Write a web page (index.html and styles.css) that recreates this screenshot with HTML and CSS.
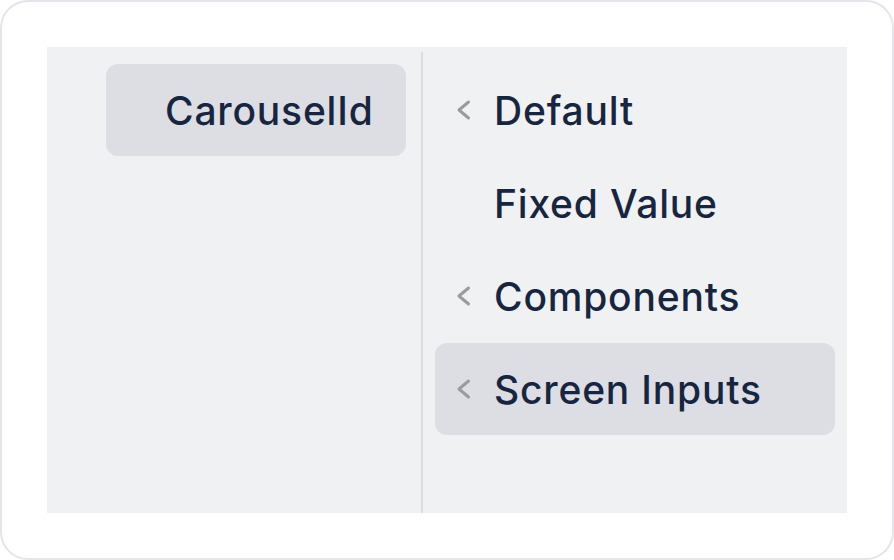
FILE: index.html
```html
<!DOCTYPE html>
<html>
<head>
<meta charset="utf-8">
<link rel="stylesheet" href="styles.css">
</head>
<body>
<div class="card">
  <div class="panel">
    <div class="col col-left">
      <div class="item item-left active">CarouselId</div>
    </div>
    <div class="divider"></div>
    <div class="col col-right">
      <div class="item">
        <svg class="chev" width="16" height="22" viewBox="0 0 16 22"><path d="M13.5 3 L4 11 L13.5 19" fill="none" stroke="#9a9ba0" stroke-width="3" stroke-linecap="round" stroke-linejoin="round"/></svg>
        <span class="label">Default</span>
      </div>
      <div class="item">
        <span class="chev"></span>
        <span class="label">Fixed Value</span>
      </div>
      <div class="item">
        <svg class="chev" width="16" height="22" viewBox="0 0 16 22"><path d="M13.5 3 L4 11 L13.5 19" fill="none" stroke="#9a9ba0" stroke-width="3" stroke-linecap="round" stroke-linejoin="round"/></svg>
        <span class="label">Components</span>
      </div>
      <div class="item active">
        <svg class="chev" width="16" height="22" viewBox="0 0 16 22"><path d="M13.5 3 L4 11 L13.5 19" fill="none" stroke="#9a9ba0" stroke-width="3" stroke-linecap="round" stroke-linejoin="round"/></svg>
        <span class="label">Screen Inputs</span>
      </div>
    </div>
  </div>
</div>
</body>
</html>
```

FILE: styles.css
```css
* { box-sizing: border-box; }
html, body { margin: 0; padding: 0; background: #ffffff; }
body {
  width: 894px;
  height: 560px;
  font-family: Inter, "Noto Sans", sans-serif;
}
.card {
  width: 894px;
  height: 560px;
  border: 2px solid #e3e5e9;
  border-radius: 28px;
  background: #ffffff;
  padding: 45px;
}
.panel {
  width: 800px;
  height: 466px;
  background: #f0f1f3;
  display: flex;
}
.col-left {
  width: 374px;
  padding: 17px 15px 0 59px;
}
.divider {
  width: 2px;
  margin-top: 5px;
  background: #dcdde1;
  border-radius: 2px 2px 0 0;
}
.col-right {
  flex: 1;
  padding: 17px 12px 0 12px;
  display: flex;
  flex-direction: column;
  gap: 1px;
}
.item {
  height: 92px;
  border-radius: 12px;
  display: flex;
  align-items: center;
  padding-left: 20px;
  font-size: 39px;
  font-weight: 500;
  color: #172640;
  letter-spacing: 0.8px;
}
.item.active { background: #dddee3; }
.item-left {
  padding-left: 59px;
}
.chev {
  flex: 0 0 16px;
  width: 16px;
  height: 22px;
  margin-right: 23px;
  display: block;
}
.label { line-height: 1; }
```
